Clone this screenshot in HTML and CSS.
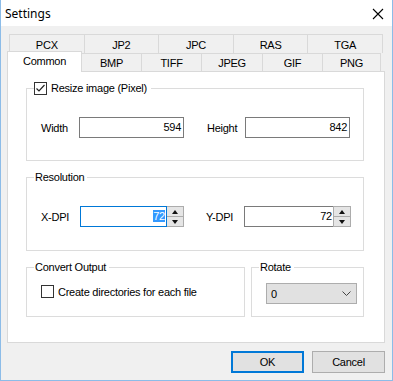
FILE: index.html
```html
<!DOCTYPE html>
<html lang="en">
<head>
    <meta charset="UTF-8">
    <title>Settings</title>
    <link rel="stylesheet" href="styles.css">
</head>
<body>
    <div class="window">
        <div class="titlebar">
            <span class="title">Settings</span>
            <svg class="close" width="12" height="12" viewBox="0 0 12 12">
                <path d="M1 1L11 11M11 1L1 11" stroke="#000" stroke-width="1.1" fill="none"/>
            </svg>
        </div>
        <div class="body">
            <div class="tabs">
                <div class="tab-row back">
                    <div class="tab">PCX</div>
                    <div class="tab">JP2</div>
                    <div class="tab">JPC</div>
                    <div class="tab">RAS</div>
                    <div class="tab last">TGA</div>
                </div>
                <div class="tab-row front">
                    <div class="tab active" style="width:75px">Common</div>
                    <div class="tab" style="width:60px">BMP</div>
                    <div class="tab" style="width:60px">TIFF</div>
                    <div class="tab" style="width:61px">JPEG</div>
                    <div class="tab" style="width:60px">GIF</div>
                    <div class="tab last" style="width:59px">PNG</div>
                </div>
            </div>
            <div class="panel">
                <fieldset class="group resize">
                    <legend class="check-legend">
                        <span class="checkbox">
                            <svg width="11" height="11" viewBox="0 0 11 11"><path d="M1.5 5.5L4 8L9.5 2" stroke="#222" stroke-width="1.2" fill="none"/></svg>
                        </span>
                        <span>Resize image (Pixel)</span>
                    </legend>
                    <div class="fields size">
                        <span class="label">Width</span>
                        <div class="textbox">594</div>
                        <span></span>
                        <span class="label">Height</span>
                        <div class="textbox">842</div>
                    </div>
                </fieldset>

                <fieldset class="group resolution">
                    <legend>Resolution</legend>
                    <div class="fields dpi">
                        <span class="label">X-DPI</span>
                        <div class="spin">
                            <div class="spin-text focused"><span class="selected">72</span></div>
                            <div class="spin-buttons">
                                <span class="up"></span>
                                <span class="down"></span>
                            </div>
                        </div>
                        <span></span>
                        <span class="label">Y-DPI</span>
                        <div class="spin">
                            <div class="spin-text">72</div>
                            <div class="spin-buttons">
                                <span class="up"></span>
                                <span class="down"></span>
                            </div>
                        </div>
                    </div>
                </fieldset>

                <div class="bottom-groups">
                    <fieldset class="group output">
                        <legend>Convert Output</legend>
                        <div class="check-row">
                            <span class="checkbox"></span>
                            <span>Create directories for each file</span>
                        </div>
                    </fieldset>
                    <fieldset class="group rotate">
                        <legend>Rotate</legend>
                        <div class="select">
                            <span>0</span>
                            <svg width="9" height="5" viewBox="0 0 9 5"><path d="M0.5 0.5L4.5 4.5L8.5 0.5" stroke="#444" stroke-width="1" fill="none"/></svg>
                        </div>
                    </fieldset>
                </div>
            </div>
            <div class="buttons">
                <button class="btn default">OK</button>
                <button class="btn">Cancel</button>
            </div>
        </div>
    </div>
</body>
</html>
```

FILE: styles.css
```css
body, html {
    margin: 0;
    padding: 0;
    background: #fff;
    font-family: 'Liberation Sans', Arial, sans-serif;
    font-size: 11px;
    letter-spacing: -0.25px;
    color: #000;
}
.window {
    width: 393px;
    height: 381px;
    box-sizing: border-box;
    border: 1px solid #8cbce8;
    border-top: none;
    display: flex;
    flex-direction: column;
    background: #f0f0f0;
}
.titlebar {
    height: 26px;
    background: #fff;
    display: flex;
    align-items: center;
    justify-content: space-between;
    padding: 0 8px 0 4px;
}
.title {
    font-family: 'Noto Sans', 'Open Sans', sans-serif;
    font-size: 12px;
    letter-spacing: 0;
    margin-top: 1px;
}
.close {
    margin-top: 2px;
}
.body {
    flex: 1;
    padding: 8px 7px 0 6px;
}

/* tabs */
.tab-row {
    display: flex;
}
.tab-row.back {
    margin: 0 2px 0 2px;
    height: 19px;
}
.tab-row.back .tab {
    flex: 1;
    border-bottom: none;
}
.tab-row.front {
    height: 18px;
    align-items: flex-end;
}
.tab {
    box-sizing: border-box;
    height: 100%;
    border: 1px solid #d9d9d9;
    border-right: none;
    border-bottom: none;
    background: #f0f0f0;
    display: flex;
    align-items: center;
    justify-content: center;
    padding-top: 1px;
}
.tab.last {
    border-right: 1px solid #d9d9d9;
}
.tab.active {
    background: #fff;
    height: 21px;
    margin-bottom: -1px;
    border-right: 1px solid #d9d9d9;
    margin-right: -1px;
    position: relative;
    z-index: 1;
    align-items: flex-start;
    padding-top: 3px;
}

/* panel */
.panel {
    box-sizing: border-box;
    height: 272px;
    background: #fff;
    border: 1px solid #d9d9d9;
    padding: 10px 0 0 18px;
}
.group {
    box-sizing: border-box;
    margin: 0;
    min-width: 0;
    border: 1px solid #dcdcdc;
    padding: 0 7px;
}
.group legend {
    padding: 0 3px 0 1px;
    line-height: 13px;
}
.group legend.check-legend {
    padding: 0 4px 0 0;
    display: flex;
    align-items: center;
    gap: 4px;
}
.resize {
    width: 338px;
    padding-top: 22px;
    padding-bottom: 22px;
}
.resolution {
    width: 338px;
    margin-top: 10px;
    padding-top: 22px;
    padding-bottom: 23px;
}
.bottom-groups {
    display: flex;
    gap: 6px;
    margin-top: 10px;
}
.output {
    width: 219px;
    padding-top: 11px;
    padding-bottom: 18px;
}
.rotate {
    width: 113px;
    padding-top: 9px;
    padding-bottom: 12px;
}

.checkbox {
    box-sizing: border-box;
    width: 13px;
    height: 13px;
    border: 1px solid #333;
    background: #fff;
    display: flex;
    align-items: center;
    justify-content: center;
}
.check-row {
    display: flex;
    align-items: center;
    gap: 4px;
    margin-left: 7px;
    height: 13px;
}

.fields {
    display: grid;
    align-items: center;
    margin-left: 7px;
    height: 21px;
}
.fields.size {
    grid-template-columns: 38px 105px 23px 38px 105px;
}
.fields.dpi {
    grid-template-columns: 39px 104px 22px 38px 107px;
}
.textbox {
    box-sizing: border-box;
    height: 21px;
    border: 1px solid #7a7a7a;
    background: #fff;
    text-align: right;
    padding: 3px 2px 0 0;
}

.spin {
    display: flex;
    height: 21px;
}
.spin-text {
    flex: 1;
    box-sizing: border-box;
    border: 1px solid #7a7a7a;
    border-right: none;
    text-align: right;
    padding: 3px 1px 0 0;
    background: #fff;
}
.spin-text.focused {
    border-color: #0078d7;
    border-right: 1px solid #0078d7;
}
.selected {
    background: #3399ff;
    color: #fff;
}
.spin-buttons {
    box-sizing: border-box;
    width: 18px;
    border: 1px solid #acacac;
    display: flex;
    flex-direction: column;
    background: #e5e5e5;
}
.spin-text.focused + .spin-buttons {
    width: 17px;
    border-left: none;
}
.spin-buttons span {
    flex: 1;
    display: flex;
    align-items: center;
    justify-content: center;
}
.spin-buttons .up {
    border-bottom: 1px solid #acacac;
}
.spin-buttons .up::before {
    content: "";
    border-left: 3px solid transparent;
    border-right: 3px solid transparent;
    border-bottom: 4px solid #111;
}
.spin-buttons .down::before {
    content: "";
    border-left: 3px solid transparent;
    border-right: 3px solid transparent;
    border-top: 4px solid #111;
}

.select {
    box-sizing: border-box;
    width: 91px;
    height: 21px;
    margin-left: 7px;
    background: #e1e1e1;
    border: 1px solid #adadad;
    display: flex;
    align-items: center;
    justify-content: space-between;
    padding: 0 5px 0 4px;
}

.buttons {
    display: flex;
    justify-content: flex-end;
    gap: 8px;
    margin-top: 8px;
}
.btn {
    box-sizing: border-box;
    width: 73px;
    height: 22px;
    background: #e1e1e1;
    border: 1px solid #adadad;
    font-family: 'Liberation Sans', Arial, sans-serif;
    font-size: 11px;
    letter-spacing: -0.25px;
    color: #000;
    padding: 0;
}
.btn.default {
    border: 2px solid #0078d7;
}
```
